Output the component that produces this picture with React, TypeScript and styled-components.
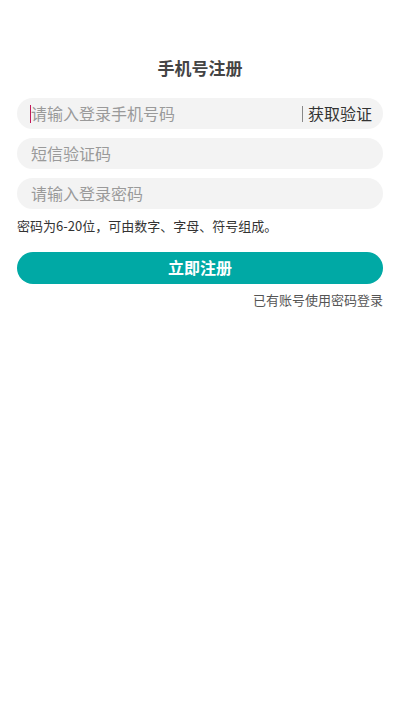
import styled, { createGlobalStyle } from "styled-components";

const GlobalStyle = createGlobalStyle`
  body {
    margin: 0;
    background: #fff;
    font-family: "Noto Sans CJK SC", "Noto Sans", sans-serif;
  }
`;

const App = () => {
  return (
    <StyledPage>
      <GlobalStyle />
      <StyledTitle>手机号注册</StyledTitle>
      <StyledForm>
        <StyledField>
          <StyledCaret />
          <StyledPlaceholder>请输入登录手机号码</StyledPlaceholder>
          <StyledDivider />
          <StyledCodeButton>获取验证</StyledCodeButton>
        </StyledField>
        <StyledField $indent>
          <StyledPlaceholder>短信验证码</StyledPlaceholder>
        </StyledField>
        <StyledField $indent>
          <StyledPlaceholder>请输入登录密码</StyledPlaceholder>
        </StyledField>
      </StyledForm>
      <StyledHint>密码为6-20位，可由数字、字母、符号组成。</StyledHint>
      <StyledSubmit>立即注册</StyledSubmit>
      <StyledLink>已有账号使用密码登录</StyledLink>
    </StyledPage>
  );
};

export default App;

const StyledPage = styled.div`
  display: flex;
  flex-direction: column;
  padding: 55px 17px 0;
  height: 711px;
  box-sizing: border-box;
`;

const StyledTitle = styled.h1`
  margin: 0;
  text-align: center;
  font-size: 17px;
  font-weight: 700;
  line-height: 26px;
  color: #444;
`;

const StyledForm = styled.div`
  display: flex;
  flex-direction: column;
  gap: 9px;
  margin-top: 17px;
`;

const StyledField = styled.div<{ $indent?: boolean }>`
  display: flex;
  align-items: center;
  height: 31px;
  padding: 0 11px 2px ${({ $indent }) => ($indent ? "14px" : "13px")};
  box-sizing: border-box;
  border-radius: 16px;
  background: #f3f3f3;
`;

const StyledCaret = styled.span`
  width: 1.5px;
  height: 18px;
  margin: 2px 0 0 -0.5px;
  background: #c2185b;
`;

const StyledPlaceholder = styled.span`
  flex: 1;
  font-size: 16px;
  line-height: 22px;
  color: #9a9a9a;
  white-space: nowrap;
`;

const StyledDivider = styled.span`
  width: 1px;
  height: 16px;
  margin: 2px 5px 0 0;
  background: #888;
`;

const StyledCodeButton = styled.span`
  font-size: 16px;
  line-height: 22px;
  color: #333;
  white-space: nowrap;
`;

const StyledHint = styled.p`
  margin: 8px 0 0;
  font-size: 13px;
  line-height: 18px;
  color: #333;
`;

const StyledSubmit = styled.button`
  margin-top: 17px;
  height: 32px;
  padding: 0 0 2px;
  border: none;
  border-radius: 16px;
  background: #00a9a5;
  color: #fff;
  font-family: inherit;
  font-size: 16px;
  font-weight: 700;
`;

const StyledLink = styled.div`
  margin-top: 7px;
  text-align: right;
  font-size: 13px;
  line-height: 18px;
  color: #555;
`;
